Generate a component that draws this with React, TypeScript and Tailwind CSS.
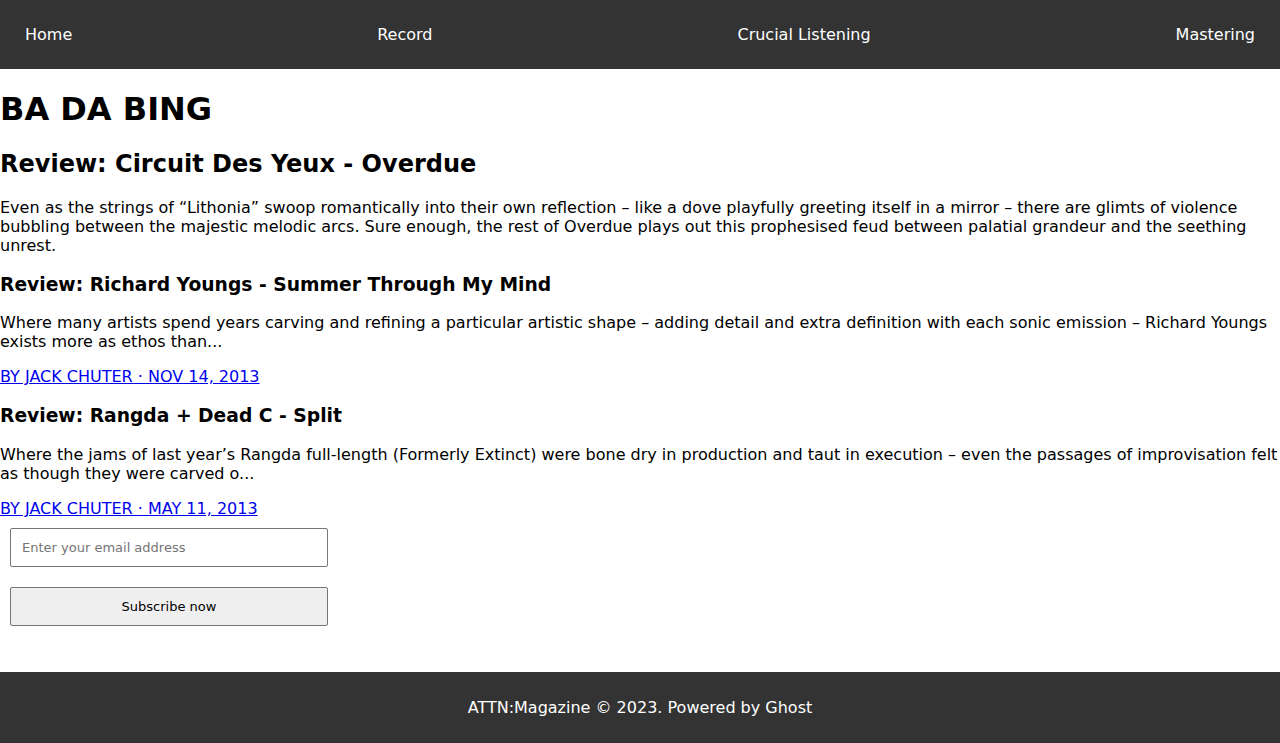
import React from "react";

export default function App() {
  return (
    <div className="min-h-[743px] bg-white text-black font-['DejaVu_Sans',sans-serif] text-base leading-[19px]">
      <nav className="h-[69px] bg-[#333333] px-[25px] flex items-center justify-between text-white">
        <a href="#" className="text-white">Home</a>
        <a href="#" className="text-white">Record</a>
        <a href="#" className="text-white">Crucial Listening</a>
        <a href="#" className="text-white">Mastering</a>
      </nav>
      <main>
        <h1 className="mt-[21px] text-[32px] leading-[38px] font-bold">BA DA BING</h1>
        <h2 className="mt-[22px] text-[24px] leading-[28px] font-bold">Review: Circuit Des Yeux - Overdue</h2>
        <p className="mt-[20px]">
          Even as the strings of “Lithonia” swoop romantically into their own reflection – like a dove playfully greeting itself in a mirror – there are glimts of violence bubbling between the majestic melodic arcs. Sure enough, the rest of Overdue plays out this prophesised feud between palatial grandeur and the seething unrest.
        </p>
        <article>
          <h3 className="mt-[19px] text-[18.72px] leading-[21px] font-bold">Review: Richard Youngs - Summer Through My Mind</h3>
          <p className="mt-[18px]">
            Where many artists spend years carving and refining a particular artistic shape – adding detail and extra definition with each sonic emission – Richard Youngs exists more as ethos than...
          </p>
          <div className="mt-[16px]">
            <a href="#" className="text-[#0000ee] underline">BY JACK CHUTER · NOV 14, 2013</a>
          </div>
        </article>
        <article>
          <h3 className="mt-[19px] text-[18.72px] leading-[21px] font-bold">Review: Rangda + Dead C - Split</h3>
          <p className="mt-[19px]">
            Where the jams of last year’s Rangda full-length (Formerly Extinct) were bone dry in production and taut in execution – even the passages of improvisation felt as though they were carved o...
          </p>
          <div className="mt-[16px]">
            <a href="#" className="text-[#0000ee] underline">BY JACK CHUTER · MAY 11, 2013</a>
          </div>
        </article>
        <form className="flex flex-col items-start" onSubmit={(e) => e.preventDefault()}>
          <input
            type="email"
            placeholder="Enter your email address"
            className="mt-[10px] ml-[10px] w-[318px] h-[39px] px-[11px] border border-[#767676] rounded-[2px] bg-white text-[13px] text-black placeholder:text-[#757575] outline-none font-['DejaVu_Sans',sans-serif]"
          />
          <button
            type="submit"
            className="mt-[20px] ml-[10px] w-[318px] h-[39px] border border-[#767676] rounded-[2px] bg-[#efefef] text-[13px] text-black font-['DejaVu_Sans',sans-serif]"
          >
            Subscribe now
          </button>
        </form>
      </main>
      <footer className="mt-[46px] h-[71px] bg-[#333333] text-white flex items-center justify-center">
        <span>ATTN:Magazine © 2023. Powered by Ghost</span>
      </footer>
    </div>
  );
}
